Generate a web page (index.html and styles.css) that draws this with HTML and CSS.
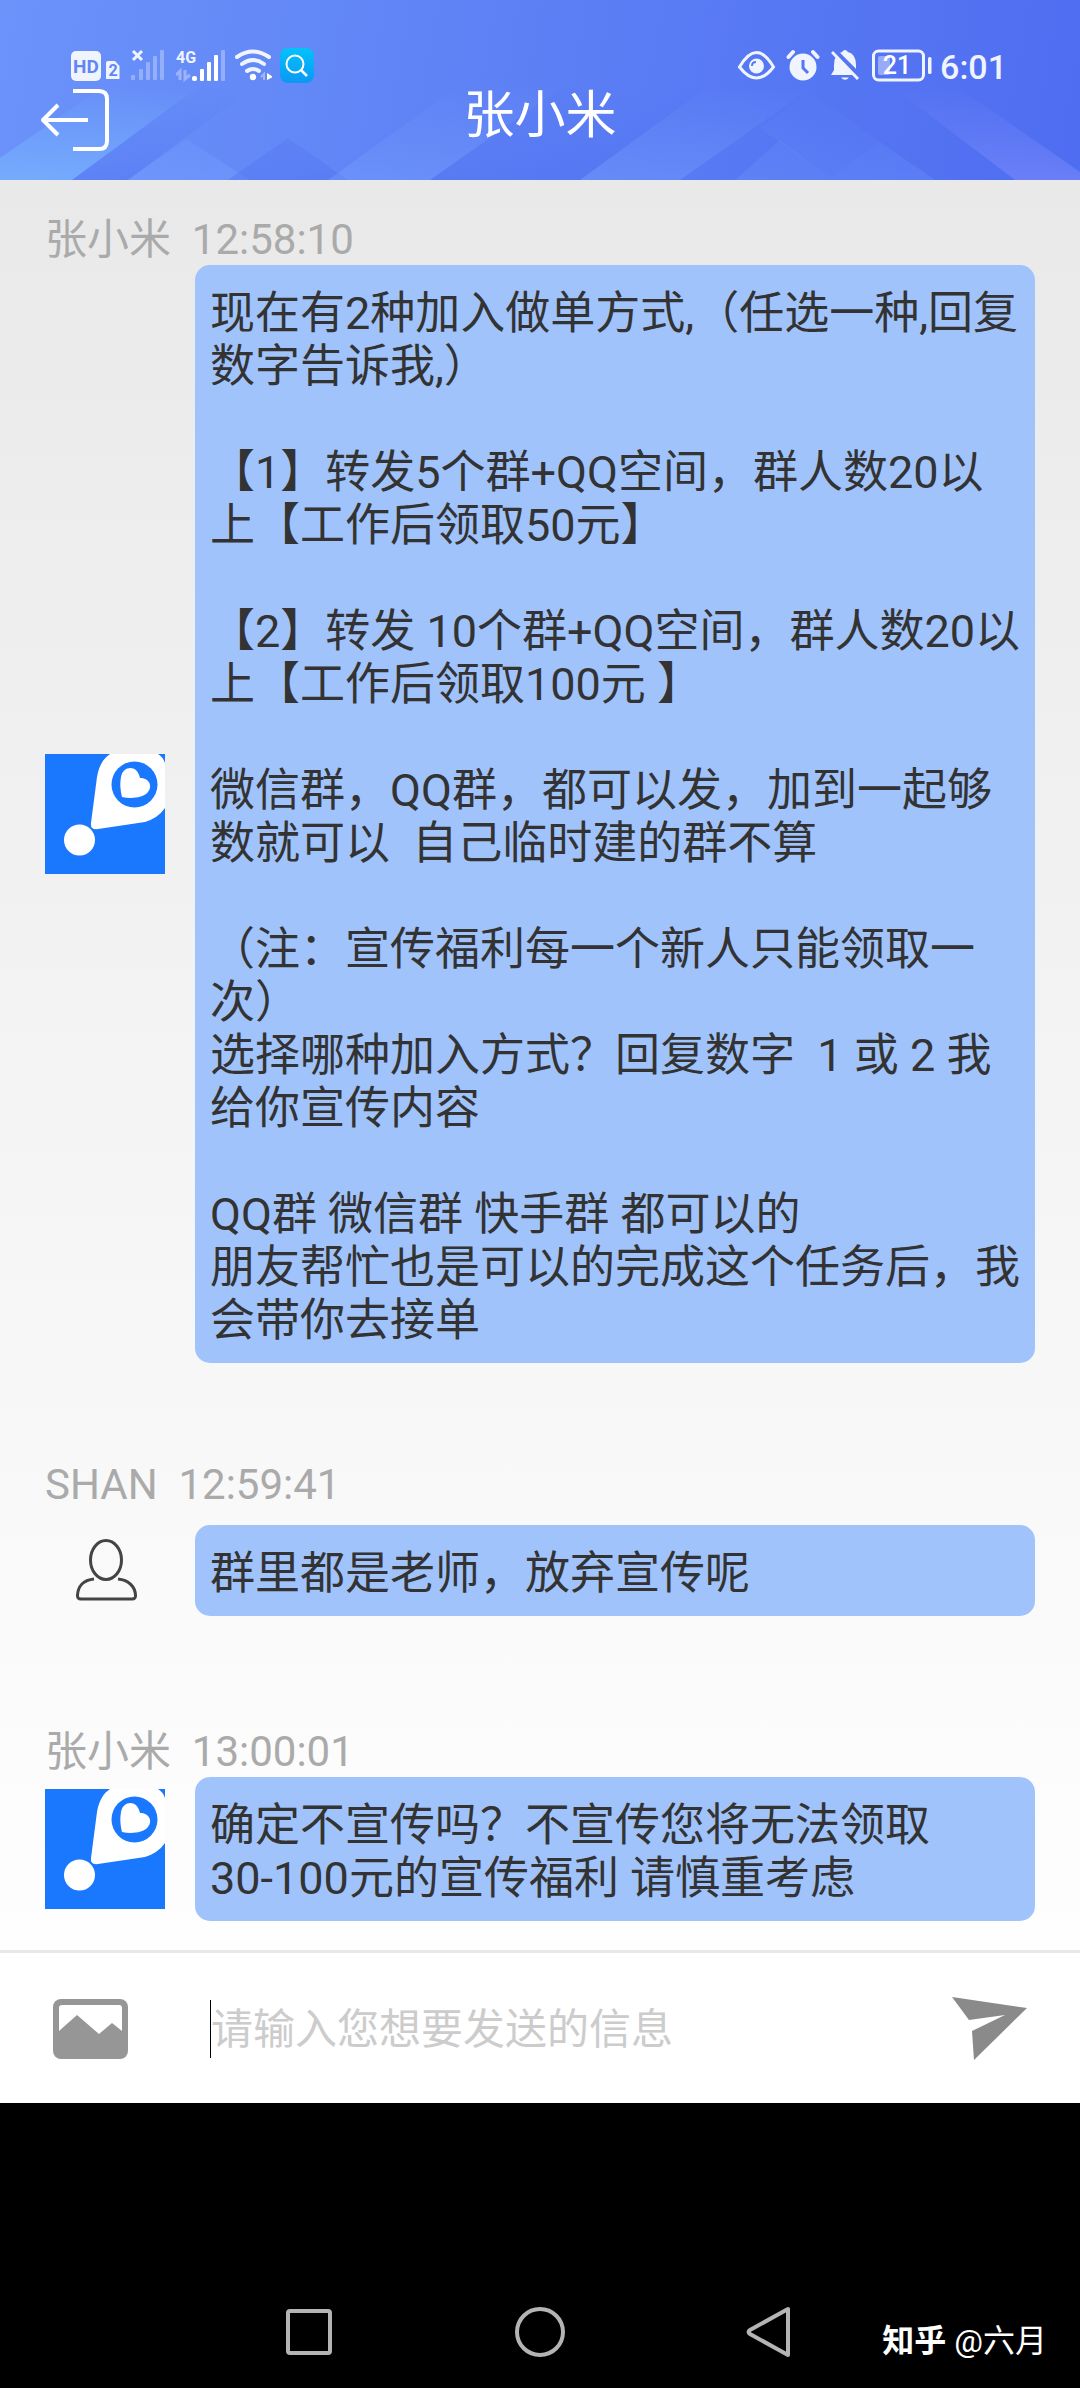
FILE: index.html
```html
<!DOCTYPE html>
<html lang="zh-CN">
<head>
<meta charset="utf-8">
<meta name="viewport" content="width=device-width, initial-scale=1">
<title>张小米</title>
<link rel="stylesheet" href="styles.css">
</head>
<body>
<svg width="0" height="0" class="defs" aria-hidden="true">
  <symbol id="brand" viewBox="0 0 120 120">
    <rect width="120" height="120" fill="#1a78ff"/>
    <path d="M46 69 L52 23 C54 11 59 4 65 0 H113 Q118 3 120 9 V54 Q113 64 100 68 L53 75 Q45 76 46 69Z" fill="#fff"/>
    <circle cx="89.500" cy="30.500" r="23" fill="#1a78ff"/>
    <path d="M77 43 C75 34 75 29 76 23 C78 12 92 10 95 24 C104 24 108 32 103 38 C98 44 86 45 77 43Z" fill="#fff"/>
    <circle cx="34.500" cy="86" r="15.500" fill="#fff"/>
  </symbol>
</svg>

<header class="header">
  <svg class="header-art" viewBox="0 0 1080 180" preserveAspectRatio="none" aria-hidden="true">
    <defs>
      <linearGradient id="cyan" gradientUnits="userSpaceOnUse" x1="0" y1="85" x2="0" y2="180"><stop offset="0" stop-color="#7cbcff" stop-opacity="0"/><stop offset="1" stop-color="#7cbcff" stop-opacity=".6"/></linearGradient>
      <linearGradient id="light" gradientUnits="userSpaceOnUse" x1="0" y1="85" x2="0" y2="180"><stop offset="0" stop-color="#7ba5ff" stop-opacity="0"/><stop offset="1" stop-color="#7ba5ff" stop-opacity=".35"/></linearGradient>
      <linearGradient id="dark" gradientUnits="userSpaceOnUse" x1="0" y1="85" x2="0" y2="180"><stop offset="0" stop-color="#4d6ff0" stop-opacity="0"/><stop offset="1" stop-color="#4d6ff0" stop-opacity=".4"/></linearGradient>
      <linearGradient id="violet" gradientUnits="userSpaceOnUse" x1="0" y1="85" x2="0" y2="180"><stop offset="0" stop-color="#8a92ff" stop-opacity="0"/><stop offset="1" stop-color="#8a92ff" stop-opacity=".45"/></linearGradient>
    </defs>
    <path fill="url(#cyan)" d="M0 158 L110 82 H205 L72 180 H0Z"/>
    <path fill="url(#dark)" d="M72 180 L205 82 H260 L128 180Z"/>
    <path fill="url(#light)" d="M128 180 L186 139 L250 180Z"/>
    <path fill="url(#dark)" d="M228 180 L288 138 L348 180Z"/>
    <path fill="url(#light)" d="M328 180 L460 85 H565 L430 180Z"/>
    <path fill="url(#dark)" d="M430 180 L565 85 H710 L580 180Z"/>
    <path fill="url(#light)" d="M580 180 L710 85 H815 L680 180Z"/>
    <path fill="url(#light)" d="M735 180 L780 140 L830 178 L880 142 L935 180Z" opacity=".6"/>
    <path fill="url(#light)" d="M760 128 L810 92 L880 142 L830 178Z" opacity=".4"/>
    <path fill="url(#violet)" d="M890 85 L1015 180 H1080 V172 L955 85Z"/>
  </svg>

  <div class="status">
    <div class="status-group">
      <svg width="49" height="38" viewBox="71 48 49 38" role="img" aria-label="HD 2">
        <rect x="71" y="51" width="30" height="30" rx="5" fill="#f0f4ff"/>
        <text x="86" y="73" class="badge-text" font-size="19" text-anchor="middle">HD</text>
        <path d="M108 61 H115 L119.500 66 V79 H106 V63 Q106 61 108 61Z" fill="#f0f4ff"/>
        <text x="113" y="76" class="badge-text" font-size="16" text-anchor="middle">2</text>
      </svg>
      <svg width="40" height="38" viewBox="128 48 40 38" aria-hidden="true">
        <path d="M133 51 L142 60 M142 51 L133 60" stroke="#f0f4ff" stroke-width="3"/>
        <g fill="#fff" opacity=".3"><rect x="131" y="75" width="4" height="5" rx="1"/><rect x="139" y="69" width="4" height="11" rx="1"/><rect x="146" y="62" width="4" height="18" rx="1"/><rect x="153" y="56" width="4" height="24" rx="1"/><rect x="160" y="50" width="4" height="30" rx="1"/></g>
      </svg>
      <svg width="50" height="38" viewBox="176 48 50 38" role="img" aria-label="4G">
        <text x="176" y="63" fill="#f0f4ff" font-size="16" font-weight="700">4G</text>
        <path d="M180 80 V71 L176 75 M185 70 V79 L190 75" fill="none" stroke="#fff" stroke-width="3" opacity=".35"/>
        <g fill="#fff"><rect x="192" y="76" width="5" height="5" rx="2"/><rect x="200" y="69" width="4" height="12" rx="1"/><rect x="207" y="62" width="4" height="19" rx="1"/><rect x="214" y="55" width="4" height="26" rx="1"/><rect x="221" y="50" width="4" height="31" rx="1" opacity=".3"/></g>
      </svg>
      <svg width="38" height="38" viewBox="234 48 38 38" aria-hidden="true">
        <g fill="none" stroke="#f0f4ff" stroke-width="4" stroke-linecap="round"><path d="M237 57 Q253 46 269 57"/><path d="M242 64 Q253 56 264 64"/><path d="M247 71 Q253 67 259 71"/></g>
        <circle cx="253" cy="77" r="3.200" fill="#fff"/>
        <path d="M264 80 V74 L261 77" stroke="#fff" stroke-width="2" opacity=".4" fill="none"/><path d="M267 73 L273 77 L267 80Z" fill="#fff"/>
      </svg>
      <svg width="35" height="38" viewBox="279 48 35 38" aria-hidden="true">
        <defs><linearGradient id="sq" x1="0" y1="0" x2="0" y2="1"><stop offset="0" stop-color="#04c2fb"/><stop offset="1" stop-color="#0a98f4"/></linearGradient></defs>
        <rect x="279" y="48" width="34" height="35" rx="8" fill="url(#sq)"/>
        <circle cx="294" cy="64" r="8.500" fill="none" stroke="#fff" stroke-width="2"/><path d="M300 70 L306 76" stroke="#fff" stroke-width="2.500"/>
      </svg>
    </div>
    <div class="status-group">
      <svg width="41" height="38" viewBox="739 48 41 38" aria-hidden="true">
        <path d="M741.500 67 Q750 52.500 758.500 52.500 T775.500 67 Q767 78 758.500 78 T741.500 67Z" fill="none" stroke="#f0f4ff" stroke-width="3"/>
        <circle cx="758.500" cy="66" r="7.500" fill="#f0f4ff"/><path d="M754 66 Q754 62 758 62" fill="none" stroke="#5a78f3" stroke-width="2"/>
      </svg>
      <svg width="37" height="38" viewBox="788 48 37 38" aria-hidden="true">
        <circle cx="805" cy="67" r="13.500" fill="#f0f4ff"/><path d="M790.500 57 L795 52 M815 52 L819.500 57" stroke="#f0f4ff" stroke-width="4" stroke-linecap="round"/><path d="M805 60 V68 L810 73" fill="none" stroke="#5575f2" stroke-width="3"/>
      </svg>
      <svg width="33" height="38" viewBox="833 48 33 38" aria-hidden="true">
        <path d="M833 75 L836 70 V65 Q836 54 844 52 Q847 48 850 52 Q858 54 858 65 V70 L861 75Z M843 77.500 H851 Q847 82 843 77.500Z" fill="#f0f4ff"/>
        <path d="M835 50 L863 78" stroke="#5575f2" stroke-width="6"/><path d="M834 52 L860 79" stroke="#f0f4ff" stroke-width="3"/>
      </svg>
      <svg width="60" height="38" viewBox="874 48 60 38" role="img" aria-label="21%">
        <rect x="875.500" y="51" width="50" height="29" rx="5" fill="none" stroke="#f0f4ff" stroke-width="3"/>
        <rect x="880" y="56" width="12" height="19" rx="2" fill="#fff" opacity=".4"/>
        <rect x="930" y="57" width="3.500" height="17" rx="1.500" fill="#f0f4ff"/>
        <text x="899" y="74" fill="#fff" font-size="25" font-weight="500" text-anchor="middle">21</text>
      </svg>
      <time class="clock">6:01</time>
    </div>
  </div>

  <div class="toolbar">
    <button class="icon-button" type="button" aria-label="返回">
      <svg width="72" height="66" viewBox="40 87 72 66" fill="none" stroke="#fff" stroke-width="4" aria-hidden="true"><path d="M73 91 H99 Q107 91 107 99 V141 Q107 149 99 149 H73"/><path d="M88 120 H43 M58 105 L43 120 L58 135" stroke-linejoin="round"/></svg>
    </button>
    <h1 class="title">张小米</h1>
  </div>
</header>

<main class="chat">
  <article class="message">
    <p class="meta">张小米  12:58:10</p>
    <div class="row">
      <svg class="avatar" role="img" aria-label="张小米"><use href="#brand"/></svg>
      <p class="bubble">现在有2种加入做单方式,（任选一种,回复数字告诉我,）

【1】转发5个群+QQ空间，群人数20以上【工作后领取50元】

【2】转发 10个群+QQ空间，群人数20以上【工作后领取100元 】

微信群，QQ群，都可以发，加到一起够数就可以  自己临时建的群不算

（注：宣传福利每一个新人只能领取一次）
选择哪种加入方式？回复数字  1 或 2 我给你宣传内容

QQ群 微信群 快手群 都可以的
朋友帮忙也是可以的完成这个任务后，我会带你去接单</p>
    </div>
  </article>

  <article class="message">
    <p class="meta">SHAN  12:59:41</p>
    <div class="row">
      <svg class="avatar" viewBox="0 0 120 120" fill="none" stroke="#444" stroke-width="3" role="img" aria-label="SHAN"><ellipse cx="61" cy="50" rx="15.500" ry="19.500"/><path d="M49 69 C38 70 33 77 32.500 85 Q32 89 36 89 H87 Q91 89 90.500 85 C90 77 84 70 73 69"/></svg>
      <p class="bubble">群里都是老师，放弃宣传呢</p>
    </div>
  </article>

  <article class="message">
    <p class="meta">张小米  13:00:01</p>
    <div class="row">
      <svg class="avatar" role="img" aria-label="张小米"><use href="#brand"/></svg>
      <p class="bubble">确定不宣传吗？不宣传您将无法领取<span class="range">30-100元</span>的宣传福利 请慎重考虑</p>
    </div>
  </article>
</main>

<form class="composer">
  <button class="icon-button" type="button" aria-label="图片">
    <svg width="76" height="62" viewBox="0 0 76 62" aria-hidden="true"><rect x="0" y="1" width="75" height="60" rx="8" fill="#969696"/><path d="M6 10 Q6 7 9 7 H66 Q69 7 69 10 V33 L59 25 L46 36 L24 17 L6 33Z" fill="#fff"/></svg>
  </button>
  <input class="field" type="text" aria-label="信息" placeholder="请输入您想要发送的信息">
  <button class="icon-button" type="submit" aria-label="发送">
    <svg width="76" height="64" viewBox="0 0 76 64" aria-hidden="true"><path d="M0 0 L75 11 L22 63 L20 34 L53 18 L17 23Z" fill="#8a8a8a"/></svg>
  </button>
</form>

<nav class="system-nav">
  <button class="icon-button" type="button" aria-label="最近任务"><svg width="52" height="52" fill="none" stroke="#b4b4b4" stroke-width="4" aria-hidden="true"><rect x="5" y="5" width="42" height="42" rx="2"/></svg></button>
  <button class="icon-button" type="button" aria-label="主屏幕"><svg width="52" height="52" fill="none" stroke="#b4b4b4" stroke-width="4" aria-hidden="true"><circle cx="26" cy="26" r="23"/></svg></button>
  <button class="icon-button" type="button" aria-label="后退"><svg width="52" height="52" fill="none" stroke="#b4b4b4" stroke-width="4" stroke-linejoin="round" aria-hidden="true"><path d="M43 3 V49 L5 28 Q2 26 5 24Z"/></svg></button>
  <span class="watermark"><b>知乎</b> @六月</span>
</nav>
</body>
</html>
```
FILE: styles.css
```css
* { box-sizing: border-box; }

body {
  margin: 0;
  min-height: 100vh;
  display: flex;
  flex-direction: column;
  background: #000;
  color: #333;
  font-family: Roboto, "Noto Sans CJK SC", sans-serif;
  text-spacing-trim: space-all;
}

.defs { position: absolute; }

svg { display: block; flex: none; }

.icon-button {
  display: block;
  flex: none;
  padding: 0;
  border: 0;
  background: none;
}

.header {
  position: relative;
  padding: 48px 0 27px;
  background: linear-gradient(100deg, #6b93fa 0%, #5e81f5 45%, #4e6df1 100%);
  color: #fff;
}

.header-art {
  position: absolute;
  inset: 0;
  width: 100%;
  height: 100%;
}

.status {
  position: relative;
  display: flex;
  justify-content: space-between;
  padding: 0 73px 0 71px;
}

.status-group {
  display: flex;
  align-items: center;
  gap: 8px;
}

.badge-text { fill: #6286f5; font-weight: 700; }

.clock {
  color: #f0f4ff;
  font-size: 34px;
  font-weight: 500;
  line-height: 38px;
}

.toolbar {
  position: relative;
  display: grid;
  grid-template-columns: 1fr auto 1fr;
  align-items: start;
  padding: 1px 40px 0;
}

.title {
  margin: 0;
  font-size: 51px;
  font-weight: 400;
  line-height: 58px;
}

.chat {
  display: flex;
  flex-direction: column;
  gap: 97px;
  padding: 35px 45px 29px;
  background: linear-gradient(#e9e9e9, #fefefe);
}

.meta {
  margin: 0;
  color: #aaa;
  font-size: 42px;
  line-height: 50px;
  white-space: pre-wrap;
}

.row {
  display: flex;
  align-items: center;
  gap: 30px;
}

.avatar { width: 120px; height: 120px; }

.bubble {
  flex: 1;
  margin: 0;
  padding: 22px 10px 16px 15px;
  border-radius: 15px;
  background: #a1c3fc;
  font-size: 45px;
  line-height: 53px;
  white-space: pre-wrap;
}

.range { white-space: nowrap; }

.composer {
  display: flex;
  align-items: center;
  padding: 44px 52px 42px 53px;
  border-top: 3px solid #e8e8e8;
  background: #fff;
}

.field {
  flex: 1;
  min-width: 0;
  height: 58px;
  margin: 0 40px 0 81px;
  padding: 0;
  border: 0;
  border-left: 1px solid #000;
  outline: 0;
  background: none;
  color: #333;
  font: inherit;
  font-size: 42px;
}

.field::placeholder { color: #ccc; opacity: 1; }

.system-nav {
  position: relative;
  display: flex;
  justify-content: center;
  gap: 179px;
  padding: 203px 0 30px;
}

.watermark {
  position: absolute;
  right: 33px;
  bottom: 25px;
  color: #fff;
  font-size: 32px;
  line-height: 44px;
}
```
